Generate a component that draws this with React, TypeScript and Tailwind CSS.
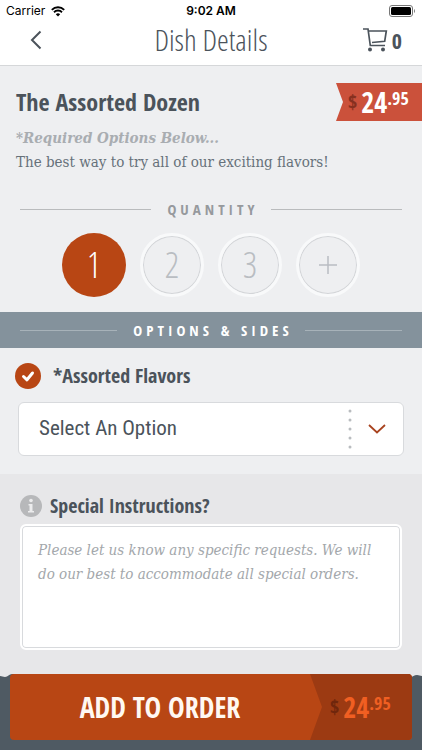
import { useState } from 'react'

const QUANTITIES = [1, 2, 3]

function SectionRule({ title, light = false }: { title: string; light?: boolean }) {
  const line = light ? 'bg-[#a7b2b9]' : 'bg-[#b9bbbd]'
  return (
    <div className="flex items-center gap-3 px-5">
      <span className={`h-px flex-1 ${line}`} />
      <h2
        className={`text-[15px] leading-6 font-bold tracking-[4px] pl-1 uppercase font-['Open_Sans_Condensed','Liberation_Sans_Narrow',sans-serif] ${
          light ? 'text-white' : 'text-[#96999d]'
        }`}
      >
        {title}
      </h2>
      <span className={`h-px flex-1 ${line}`} />
    </div>
  )
}

function Price({ symbolClass, className }: { symbolClass: string; className: string }) {
  return (
    <span
      className={`flex items-center font-bold font-['Open_Sans_Condensed','Liberation_Sans_Narrow',sans-serif] ${className}`}
    >
      <span className={`mr-1 text-xl leading-8 ${symbolClass}`}>$</span>
      <span className="text-[28px] leading-8">24</span>
      <span className="self-start text-lg leading-6">.95</span>
    </span>
  )
}

export default function App() {
  const [quantity, setQuantity] = useState(1)
  const [option, setOption] = useState('')
  const [notes, setNotes] = useState('')

  return (
    <div className="min-h-screen flex flex-col bg-[#eeeff1] text-[#4b535b] font-['Open_Sans_Condensed','DejaVu_Sans_Condensed','Noto_Sans',sans-serif]">
      {/* Status bar */}
      <div className="grid grid-cols-3 items-center h-[22px] px-1.5 bg-white text-black text-xs font-['Inter',sans-serif]">
        <div className="flex items-center gap-1.5">
          Carrier
          <svg width="14" height="11" viewBox="0 0 14 11" fill="none" stroke="#000" strokeWidth="1.900">
            <path d="M.8 3.800a8.800 8.800 0 0 1 12.400 0M3 6.200a5.700 5.700 0 0 1 8 0" />
            <path d="M7 10.500 4.800 8.200a3.200 3.200 0 0 1 4.400 0z" fill="#000" stroke="none" />
          </svg>
        </div>
        <span className="text-center font-semibold">9:02 AM</span>
        <svg className="justify-self-end" width="27" height="12" viewBox="0 0 27 12">
          <rect x="0.5" y="0.5" width="23" height="11" rx="2.5" fill="none" stroke="#777" />
          <rect x="2" y="2" width="20" height="8" rx="1.5" />
          <path d="M25 4v4c1.300-.6 1.300-3.400 0-4z" fill="#777" />
        </svg>
      </div>

      {/* Nav bar */}
      <header className="grid grid-cols-[1fr_auto_1fr] items-center h-11 px-5 pb-2 bg-white border-b border-[#d5d7d9]">
        <button type="button" aria-label="Back" className="w-8 h-8 flex items-center justify-center">
          <svg width="12" height="20" viewBox="0 0 12 20" fill="none" stroke="#4b535b" strokeWidth="2">
            <path d="M10.500 1.500 2 10l8.500 8.500" />
          </svg>
        </button>
        <h1 className="text-[30px] leading-8 font-light font-['Open_Sans_Condensed_Light','Roboto_Condensed',sans-serif]">
          Dish Details
        </h1>
        <button
          type="button"
          aria-label="Cart, 0 items"
          className="justify-self-end flex items-center gap-1 text-[22px] leading-8 font-bold font-['Open_Sans_Condensed','Liberation_Sans_Narrow',sans-serif]"
        >
          <svg width="25" height="24" viewBox="0 0 25 24" fill="none" stroke="#4b535b" strokeWidth="1.700">
            <path d="M0 1h5l2.300 16.500H22M5.300 3H23.300L21.700 13.300 9 14.500" />
            <circle cx="7" cy="21.500" r="2" fill="#4b535b" stroke="none" />
            <circle cx="20" cy="21.500" r="2" fill="#4b535b" stroke="none" />
          </svg>
          0
        </button>
      </header>

      <main className="flex-1 flex flex-col">
        {/* Dish */}
        <section className="pt-[17px]">
          <div className="flex items-center justify-between pl-4">
            <h2 className="text-2xl leading-8 font-bold">The Assorted Dozen</h2>
            <div className="w-[86px] h-[38px] flex items-center pl-3 bg-[#cb513b] [clip-path:polygon(0_0,100%_0,100%_100%,0_100%,7px_50%)]">
              <Price symbolClass="text-[#87301f]" className="text-white" />
            </div>
          </div>
          <div className="px-4 pt-[5px] text-[15px] leading-6 font-['DejaVu_Serif_Condensed','Liberation_Serif',serif]">
            <p className="italic font-bold text-[#a9adb1]">*Required Options Below...</p>
            <p className="text-[#66717a]">The best way to try all of our exciting flavors!</p>
          </div>
        </section>

        {/* Quantity */}
        <section className="pt-[23px] pb-[15px]">
          <SectionRule title="Quantity" />
          <div className="flex justify-center gap-3.5 pt-3">
            {QUANTITIES.map((n) => (
              <label
                key={n}
                className={`w-16 h-16 rounded-full flex items-center justify-center text-4xl font-light cursor-pointer font-['Open_Sans_Condensed_Light','Roboto_Condensed',sans-serif] ${
                  quantity === n
                    ? 'bg-[#b84614] text-white'
                    : 'border-[3px] border-[#f8f9fa] text-[#b9bdc2] inset-ring inset-ring-[#d3d5d8]'
                }`}
              >
                <input
                  type="radio"
                  name="quantity"
                  className="sr-only"
                  checked={quantity === n}
                  onChange={() => setQuantity(n)}
                />
                {n}
              </label>
            ))}
            <button
              type="button"
              aria-label="More"
              onClick={() => setQuantity((q) => q + 1)}
              className="w-16 h-16 rounded-full flex items-center justify-center border-[3px] border-[#f8f9fa] inset-ring inset-ring-[#d3d5d8]"
            >
              <svg width="18" height="18" viewBox="0 0 18 18" stroke="#b9bdc2" strokeWidth="1.500">
                <path d="M9 0v18M0 9h18" />
              </svg>
            </button>
          </div>
        </section>

        {/* Options */}
        <section className="pb-[18px]">
          <div className="py-1.5 bg-[#84929c]">
            <SectionRule title="Options & Sides" light />
          </div>
          <div className="flex items-center gap-3 px-[15px] pt-[15px] pb-[13px]">
            <svg width="26" height="26" viewBox="0 0 26 26">
              <circle cx="13" cy="13" r="13" fill="#b84614" />
              <path
                d="m8.500 13.500 3.500 3.300 5.500-6.800"
                fill="none"
                stroke="#fff"
                strokeWidth="3"
                strokeLinecap="round"
                strokeLinejoin="round"
              />
            </svg>
            <label htmlFor="flavors" className="text-xl leading-6 font-bold">
              *Assorted Flavors
            </label>
          </div>
          <div className="relative mx-[18px]">
            <select
              id="flavors"
              value={option}
              onChange={(e) => setOption(e.target.value)}
              className="block w-full h-[54px] pl-5 pr-20 appearance-none rounded-md bg-white border border-[#d8dadd] text-[21px] font-['Roboto_Condensed','Liberation_Sans_Narrow',sans-serif]"
            >
              <option value="">Select An Option</option>
              <option value="assorted">Assorted</option>
            </select>
            <div className="absolute inset-y-0 right-[18px] flex items-center gap-4 pointer-events-none">
              <svg width="4" height="42" viewBox="0 0 4 42" fill="#b9bcbf">
                {[3, 12, 21, 30, 39].map((y) => (
                  <circle key={y} cx="2" cy={y} r="1.500" />
                ))}
              </svg>
              <svg width="18" height="10" viewBox="0 0 18 10" fill="none" stroke="#a8431f" strokeWidth="1.800">
                <path d="m1 1 8 7.500L17 1" />
              </svg>
            </div>
          </div>
        </section>

        {/* Instructions */}
        <section className="flex-1 px-5 pt-5 pb-6 bg-[#e7e7e9]">
          <div className="flex items-center gap-2 pb-1.5">
            <svg width="22" height="22" viewBox="0 0 22 22">
              <circle cx="11" cy="11" r="11" fill="#b7b8ba" />
              <path d="M8.500 9H12.500v7H14v1.500H8V16h1.500v-5.500h-1z" fill="#ececed" />
              <circle cx="11" cy="5.500" r="1.800" fill="#ececed" />
            </svg>
            <label htmlFor="notes" className="text-xl leading-6 font-bold">
              Special Instructions?
            </label>
          </div>
          <textarea
            id="notes"
            value={notes}
            onChange={(e) => setNotes(e.target.value)}
            placeholder="Please let us know any specific requests. We will do our best to accommodate all special orders."
            className="block w-full h-[126px] px-4 py-3 resize-none rounded-md bg-white border-2 border-white inset-ring inset-ring-[#d8dadd] text-[15px] leading-6 italic placeholder:text-[#a3a7ab] font-['DejaVu_Serif_Condensed','Liberation_Serif',serif]"
          />
        </section>
      </main>

      {/* Order bar */}
      <footer className="relative px-2.5 pb-2.5 bg-[#4f5a63]">
        <svg className="absolute left-0 top-0" width="12" height="4" viewBox="0 0 12 4" fill="#e7e7e9">
          <path d="M0 0h12c-3 0-4 3-7 3C3 3 2 2 0 2z" />
        </svg>
        <svg className="absolute right-0 top-0" width="12" height="4" viewBox="0 0 12 4" fill="#e7e7e9">
          <path d="M0 0h12v2c-2 0-3-1-5-1-3 0-4 2-7 2z" />
        </svg>
        <button
          type="button"
          className="relative flex w-full h-[66px] rounded-sm overflow-hidden bg-[#b84614]"
        >
          <span className="flex-1 self-center text-[28px] font-bold text-[#fff8f2] uppercase font-['Open_Sans_Condensed','Liberation_Sans_Narrow',sans-serif]">
            Add to order
          </span>
          <span className="w-[102px] self-stretch flex items-center pl-5 bg-[#9c3a12] [clip-path:polygon(0_0,100%_0,100%_100%,0_100%,12px_50%)]">
            <Price symbolClass="text-[#6f260c]" className="text-[#f05f22]" />
          </span>
        </button>
      </footer>
    </div>
  )
}
